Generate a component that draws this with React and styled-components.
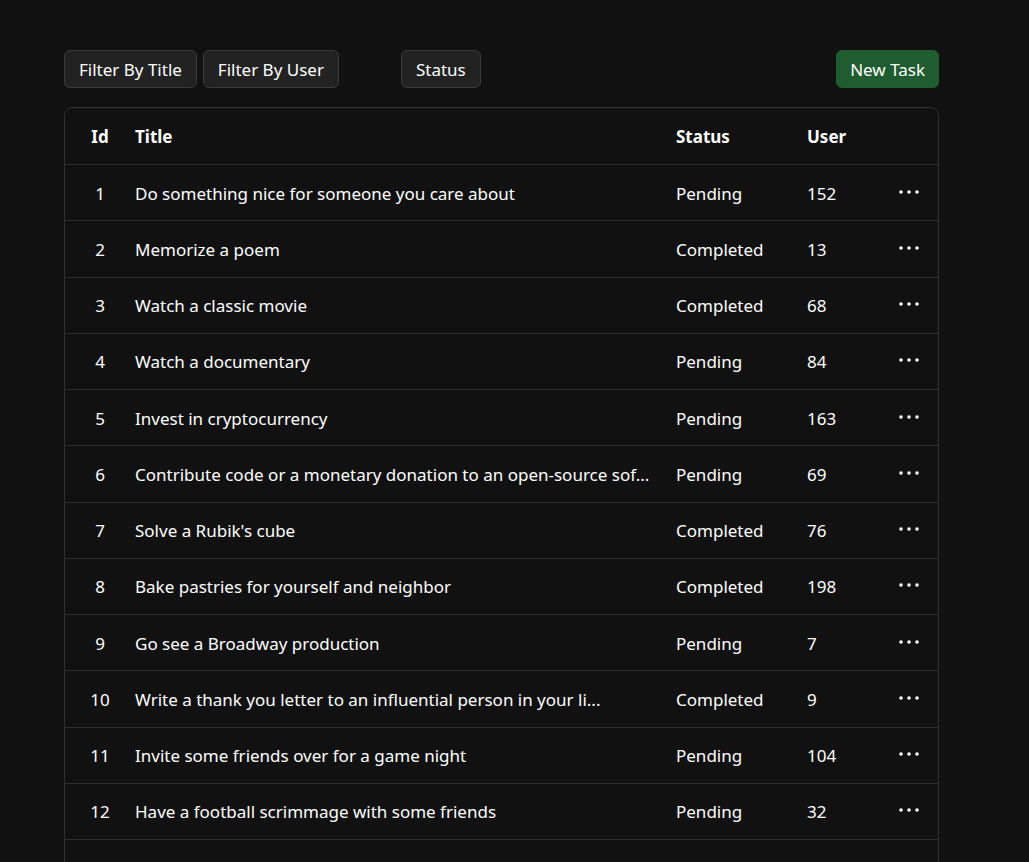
import React from "react";
import styled, { createGlobalStyle } from "styled-components";

const tasks = [
  { id: 1, title: "Do something nice for someone you care about", status: "Pending", user: 152 },
  { id: 2, title: "Memorize a poem", status: "Completed", user: 13 },
  { id: 3, title: "Watch a classic movie", status: "Completed", user: 68 },
  { id: 4, title: "Watch a documentary", status: "Pending", user: 84 },
  { id: 5, title: "Invest in cryptocurrency", status: "Pending", user: 163 },
  { id: 6, title: "Contribute code or a monetary donation to an open-source software project", status: "Pending", user: 69 },
  { id: 7, title: "Solve a Rubik's cube", status: "Completed", user: 76 },
  { id: 8, title: "Bake pastries for yourself and neighbor", status: "Completed", user: 198 },
  { id: 9, title: "Go see a Broadway production", status: "Pending", user: 7 },
  { id: 10, title: "Write a thank you letter to an influential person in your life", status: "Completed", user: 9 },
  { id: 11, title: "Invite some friends over for a game night", status: "Pending", user: 104 },
  { id: 12, title: "Have a football scrimmage with some friends", status: "Pending", user: 32 },
  { id: 13, title: "Text a friend you haven't talked to in a long time", status: "Pending", user: 18 },
];

const shorten = (s) => (s.length > 60 ? s.slice(0, 60) + "..." : s);

const GlobalStyle = createGlobalStyle`
  html, body {
    margin: 0;
    background: #111111;
    color: #ffffff;
    font-family: "Noto Sans", "Open Sans", sans-serif;
  }
`;

const Page = styled.main`
  padding: 50px 90px 0 64px;
  height: 862px;
  box-sizing: border-box;
  overflow: hidden;
`;

const Toolbar = styled.div`
  display: flex;
  align-items: center;
  gap: 6px;
  margin-bottom: 19px;
`;

const Button = styled.button`
  height: 38px;
  padding: 0 ${(p) => (p.$primary ? 13 : 14)}px;
  border-radius: 6px;
  border: 1px solid ${(p) => (p.$primary ? "#1f5d31" : "#3a3a3a")};
  background: ${(p) => (p.$primary ? "#1f5d31" : "#222222")};
  color: #ffffff;
  font-family: inherit;
  font-size: 17px;
  margin-left: ${(p) => p.$offset || 0}px;
  cursor: pointer;
`;

const Spacer = styled.div`
  flex: 1;
`;

const Table = styled.div`
  border: 1px solid #303030;
  border-radius: 8px;
`;

const Row = styled.div`
  display: grid;
  grid-template-columns: 62px 541px 131px 81px 58px;
  height: ${(p) => (p.$head ? 56 : 55.25)}px;
  align-items: center;
  border-top: ${(p) => (p.$head ? "none" : "1px solid #2e2e2e")};
  font-size: 17px;
  font-weight: ${(p) => (p.$head ? 700 : 400)};
`;

const Cell = styled.div`
  padding: 1px 8px 0;
  white-space: nowrap;
  overflow: hidden;
`;

const IdCell = styled(Cell)`
  padding: 1px 8px 0 16px;
  text-align: center;
`;

const Actions = styled.div`
  display: flex;
  justify-content: center;
  padding-bottom: 2px;
`;

const Dots = () => (
  <svg width="20" height="4" viewBox="0 0 20 4">
    <circle cx="2" cy="2" r="1.8" fill="#fff" />
    <circle cx="10" cy="2" r="1.8" fill="#fff" />
    <circle cx="18" cy="2" r="1.8" fill="#fff" />
  </svg>
);

export default function App() {
  return (
    <Page>
      <GlobalStyle />
      <Toolbar>
        <Button>Filter By Title</Button>
        <Button>Filter By User</Button>
        <Button $offset={56}>Status</Button>
        <Spacer />
        <Button $primary>New Task</Button>
      </Toolbar>
      <Table>
        <Row $head>
          <IdCell>Id</IdCell>
          <Cell>Title</Cell>
          <Cell>Status</Cell>
          <Cell>User</Cell>
          <Cell />
        </Row>
        {tasks.map((t) => (
          <Row key={t.id}>
            <IdCell>{t.id}</IdCell>
            <Cell>{shorten(t.title)}</Cell>
            <Cell>{t.status}</Cell>
            <Cell>{t.user}</Cell>
            <Actions>
              <Dots />
            </Actions>
          </Row>
        ))}
      </Table>
    </Page>
  );
}
